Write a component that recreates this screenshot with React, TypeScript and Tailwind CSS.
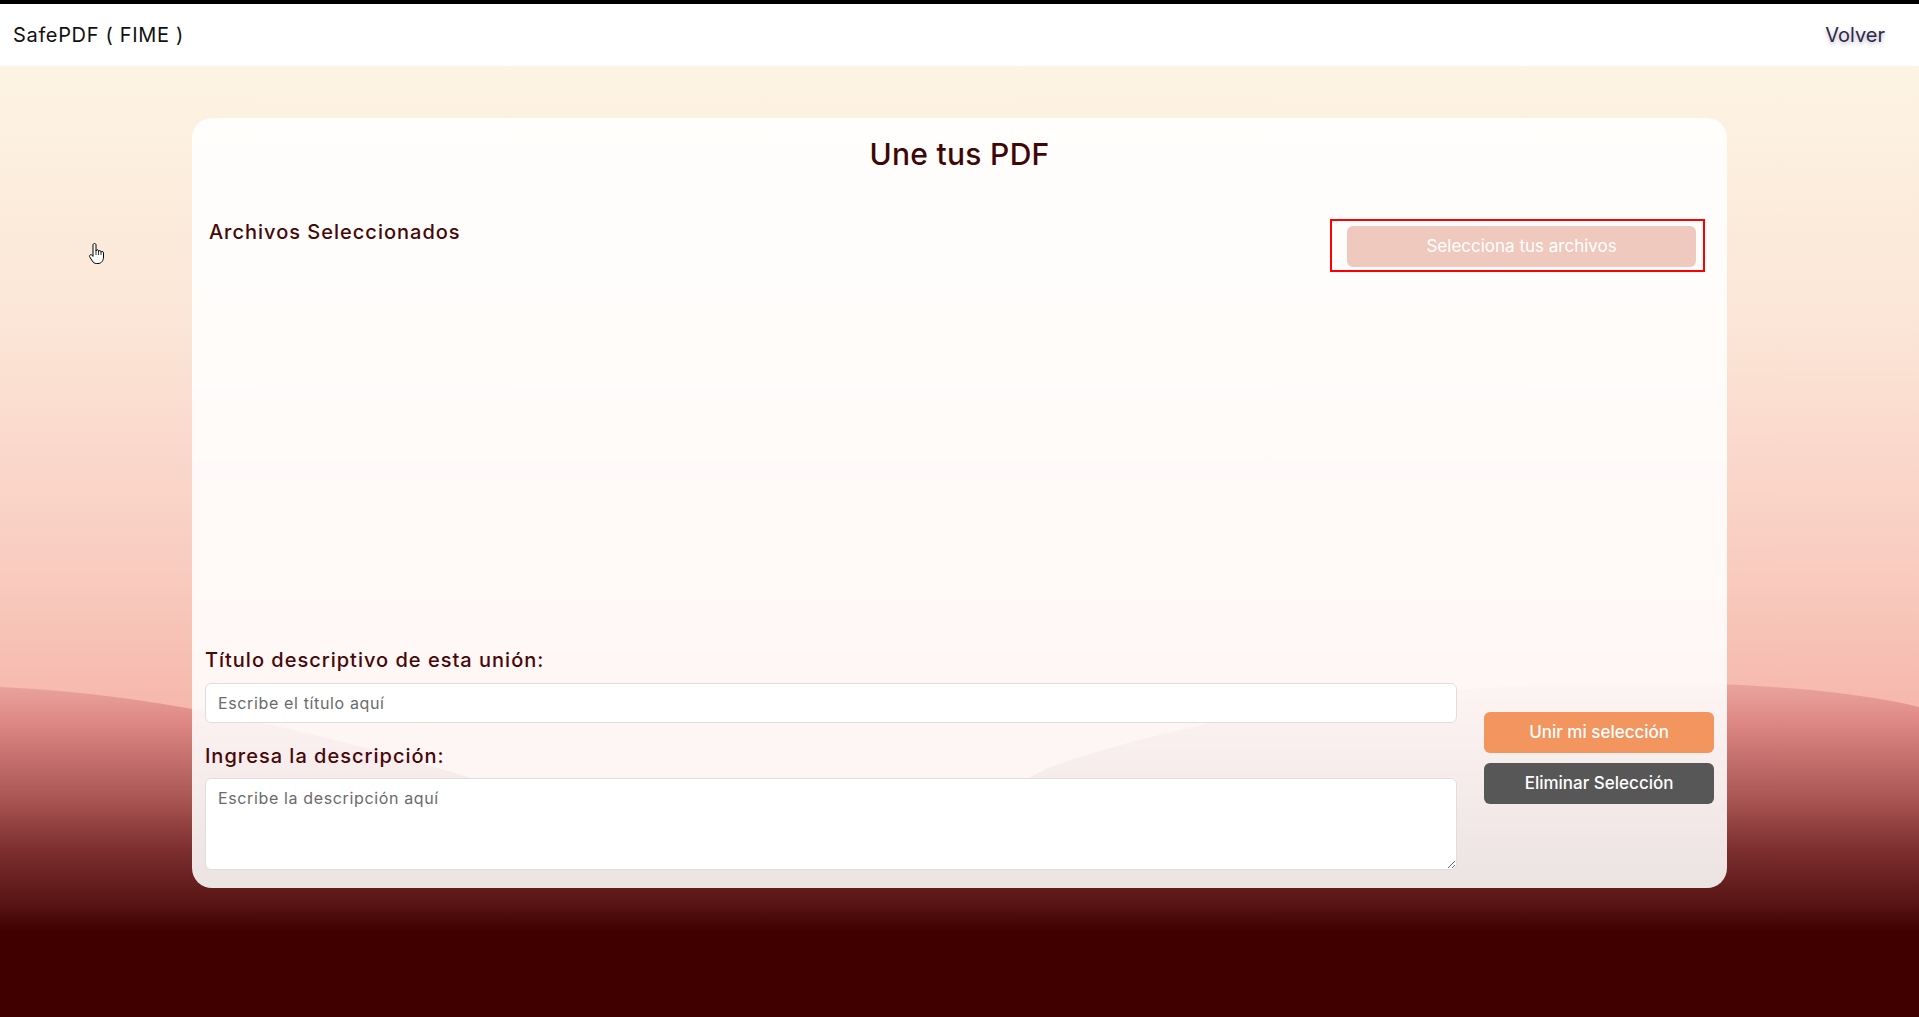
import React from "react";

const font = { fontFamily: "Inter, 'Noto Sans', sans-serif" };

function HandCursor() {
  return (
    <svg
      className="absolute left-[88px] top-[176px] w-[18px] h-[23px]"
      viewBox="0 0 18 23"
      fill="none"
    >
      <path
        d="M6.5 1.5C7.3 1.5 8 2.1 8 3V9C8 8.3 8.6 7.8 9.3 7.8C10 7.8 10.5 8.3 10.5 9V9.6C10.6 9 11.1 8.6 11.8 8.6C12.5 8.6 13 9.1 13 9.8V10.4C13.1 9.9 13.6 9.5 14.2 9.5C14.9 9.5 15.5 10 15.5 10.8V15C15.5 18.5 13.5 21.5 10 21.5H8.5C6.5 21.5 5.3 20.5 4.3 19L1.8 15C1.3 14.2 1.5 13.3 2.2 12.9C2.9 12.5 3.8 12.7 4.3 13.4L5 14.4V3C5 2.1 5.7 1.5 6.5 1.5Z"
        fill="white"
        stroke="black"
        strokeWidth="1"
        strokeLinejoin="round"
      />
      <path d="M8 9V13M10.5 9.6V13M13 10.4V13" stroke="black" strokeWidth="0.8" />
    </svg>
  );
}

function Waves() {
  return (
    <svg
      className="absolute bottom-0 left-0 w-full h-[340px]"
      viewBox="0 0 1919 340"
      preserveAspectRatio="none"
    >
      <defs>
        <linearGradient id="hill" gradientUnits="userSpaceOnUse" x1="0" y1="0" x2="0" y2="340">
          <stop offset="0.03" stopColor="#e8a29d" />
          <stop offset="0.12" stopColor="#e08b88" />
          <stop offset="0.36" stopColor="#a95553" />
          <stop offset="0.51" stopColor="#7c2e2e" />
          <stop offset="0.66" stopColor="#5a1515" />
          <stop offset="0.75" stopColor="#400000" />
          <stop offset="1" stopColor="#400000" />
        </linearGradient>
      </defs>
      <path
        d="M0,10 C200,18 420,80 620,150 C700,178 760,190 800,190 C880,190 950,140 1050,90 C1250,20 1480,6 1650,6 C1780,6 1870,18 1919,30 V340 H0 Z"
        fill="url(#hill)"
      />
    </svg>
  );
}

export default function App() {
  return (
    <div className="min-h-screen flex flex-col" style={font}>
      <header className="h-[66px] shrink-0 border-t-4 border-black bg-white flex items-center justify-between pl-[13px] pr-[34px]">
        <span className="text-[20px] tracking-[0.033em] text-[#111]">SafePDF ( FIME )</span>
        <span className="text-[20px] text-[#2d2a48] [text-shadow:0_2px_4px_rgba(40,0,60,0.3)]">
          Volver
        </span>
      </header>

      <main className="relative flex-1 overflow-hidden">
        <div className="absolute inset-0 bg-[linear-gradient(to_bottom,#fdf4e3_0%,#fbe5d6_28%,#f9cdc1_52%,#f6b4a9_70%,#f6b3a8_100%)]" />
        <Waves />
        <HandCursor />

        <div className="relative mx-auto mt-[52px] w-[80%] h-[770px] rounded-[20px] bg-white/[0.88] flex flex-col">
          <h1 className="pt-[18px] text-center text-[30px] leading-9 font-medium tracking-[0.01em] text-[#3f0606]">
            Une tus PDF
          </h1>

          <div className="mt-[46px] flex items-start justify-between pl-[17px] pr-[22px]">
            <h2 className="text-[20px] leading-7 font-medium tracking-[0.05em] text-[#470808]">
              Archivos Seleccionados
            </h2>
            <div className="mt-px border-2 border-[#ff0000] pl-[15px] pr-[7px] pt-[5px] pb-[3px]">
              <button className="w-[349px] h-[41px] rounded-md bg-[#efc9bd] text-white text-[17px]">
                Selecciona tus archivos
              </button>
            </div>
          </div>

          <div className="flex-1" />

          <div className="grid grid-cols-[1fr_230px] gap-x-[27px] items-center pl-[13px] pr-[13px] pb-[18px]">
            <div className="flex flex-col">
              <label className="text-[20px] leading-7 font-medium tracking-[0.05em] text-[#470808]">
                Título descriptivo de esta unión:
              </label>
              <input
                className="mt-[9px] h-[40px] rounded-md border border-[#dedede] bg-white px-3 text-[16px] tracking-[0.04em] text-[#333] placeholder:text-[#6b6b6b] outline-none"
                placeholder="Escribe el título aquí"
              />
              <label className="mt-[19px] text-[20px] leading-7 font-medium tracking-[0.05em] text-[#470808]">
                Ingresa la descripción:
              </label>
              <textarea
                className="mt-[8px] h-[92px] rounded-md border border-[#dedede] bg-white px-3 py-[7px] text-[16px] tracking-[0.04em] text-[#333] placeholder:text-[#6b6b6b] outline-none"
                placeholder="Escribe la descripción aquí"
              />
            </div>
            <div className="flex flex-col gap-[10px]">
              <button className="h-[41px] rounded-md bg-[#f2955e] text-white text-[17px] font-medium">
                Unir mi selección
              </button>
              <button className="h-[41px] rounded-md bg-[#575757] text-white text-[17px] font-medium">
                Eliminar Selección
              </button>
            </div>
          </div>
        </div>
      </main>
    </div>
  );
}
